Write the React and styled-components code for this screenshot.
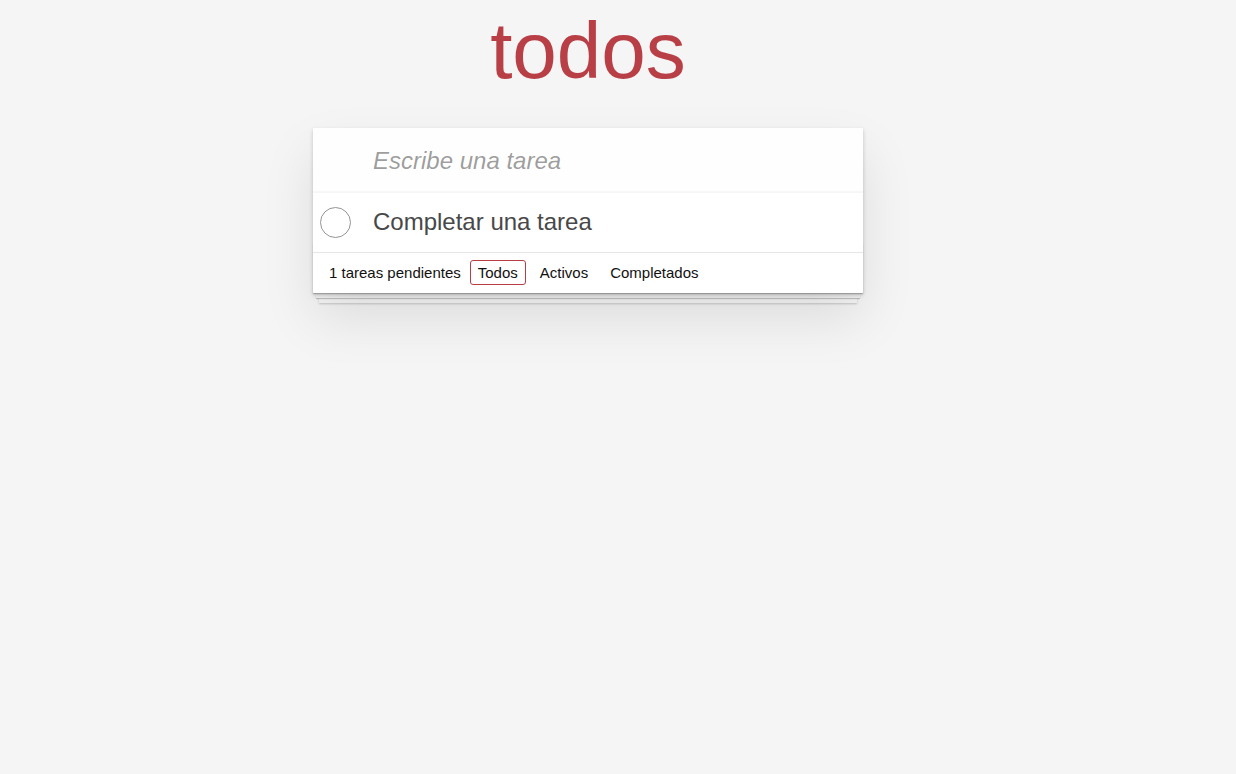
import React, { useState } from "react";
import styled, { createGlobalStyle } from "styled-components";

const GlobalStyle = createGlobalStyle`
  * { box-sizing: border-box; }
  html, body {
    margin: 0;
    padding: 0;
  }
  body {
    background: #f5f5f5;
    color: #111111;
    font: 14px "Liberation Sans", Arial, Helvetica, sans-serif;
    line-height: 1.4em;
    -webkit-font-smoothing: antialiased;
  }
`;

const Page = styled.div`
  display: flex;
  justify-content: center;
  padding-right: 60px;
  min-height: 774px;
`;

const Column = styled.div`
  width: 550px;
  display: flex;
  flex-direction: column;
`;

const Title = styled.h1`
  margin: 5px 0 31px;
  font-size: 80px;
  line-height: 92px;
  font-weight: 200;
  text-align: center;
  color: #b83f45;
  text-rendering: optimizeLegibility;
`;

const Card = styled.section`
  position: relative;
  background: #ffffff;
  box-shadow: 0 2px 4px 0 rgba(0, 0, 0, 0.2), 0 25px 50px 0 rgba(0, 0, 0, 0.1);
`;

const NewTodo = styled.input`
  display: block;
  width: 100%;
  height: 65px;
  margin: 0;
  padding: 16px 16px 16px 60px;
  border: none;
  outline: none;
  background: rgba(0, 0, 0, 0.003);
  box-shadow: inset 0 -2px 1px rgba(0, 0, 0, 0.03);
  font-family: inherit;
  font-size: 24px;
  line-height: 1.4em;
  color: inherit;
  &::placeholder {
    font-style: italic;
    font-weight: 400;
    color: rgba(0, 0, 0, 0.4);
  }
`;

const List = styled.ul`
  margin: 0;
  padding: 0;
  list-style: none;
`;

const Item = styled.li`
  display: flex;
  align-items: center;
  border-bottom: 1px solid #ededed;
  &:last-child {
    border-bottom: none;
  }
`;

const ToggleCell = styled.label`
  width: 60px;
  align-self: stretch;
  display: flex;
  align-items: center;
  padding-left: 7px;
  cursor: pointer;
`;

const ToggleCircle = styled.span`
  width: 31px;
  height: 31px;
  border-radius: 50%;
  border: 1px solid ${(p) => (p.$done ? "#59a193" : "#949494")};
`;

const Label = styled.span`
  flex: 1;
  padding: 15px 15px 15px 0;
  font-size: 24px;
  line-height: 1.2;
  font-weight: 400;
  color: ${(p) => (p.$done ? "#949494" : "#484848")};
  text-decoration: ${(p) => (p.$done ? "line-through" : "none")};
  word-break: break-all;
`;

const Footer = styled.footer`
  position: relative;
  display: flex;
  align-items: center;
  height: 41px;
  padding: 0 15px 0 16px;
  border-top: 1px solid #e6e6e6;
  color: #111111;
  font-size: 15px;

  &::before {
    content: "";
    position: absolute;
    right: 0;
    bottom: 0;
    left: 0;
    height: 50px;
    overflow: hidden;
    z-index: -1;
    box-shadow: 0 1px 1px rgba(0, 0, 0, 0.2), 0 8px 0 -3px #f6f6f6,
      0 9px 1px -3px rgba(0, 0, 0, 0.2), 0 16px 0 -6px #f6f6f6,
      0 17px 2px -6px rgba(0, 0, 0, 0.2);
  }
`;

const Count = styled.span`
  margin-right: 6px;
`;

const Filters = styled.ul`
  display: flex;
  margin: 0;
  padding: 0;
  list-style: none;
`;

const FilterLink = styled.a`
  display: inline-block;
  margin: 0 3px;
  padding: 3px 7px;
  line-height: 17px;
  border: 1px solid ${(p) => (p.$selected ? "#b83f45" : "transparent")};
  border-radius: 3px;
  color: inherit;
  text-decoration: none;
  cursor: pointer;
  &:hover {
    border-color: ${(p) => (p.$selected ? "#b83f45" : "#e5b6b8")};
  }
`;

export default function App() {
  const [todos, setTodos] = useState([
    { id: 1, text: "Completar una tarea", done: false },
  ]);
  const [filter, setFilter] = useState("Todos");
  const pending = todos.filter((t) => !t.done).length;

  const shown = todos.filter((t) =>
    filter === "Activos" ? !t.done : filter === "Completados" ? t.done : true
  );

  return (
    <>
      <GlobalStyle />
      <Page>
        <Column>
          <Title>todos</Title>
          <Card>
            <NewTodo placeholder="Escribe una tarea" />
            <List>
              {shown.map((t) => (
                <Item key={t.id}>
                  <ToggleCell
                    onClick={() =>
                      setTodos((ts) =>
                        ts.map((x) => (x.id === t.id ? { ...x, done: !x.done } : x))
                      )
                    }
                  >
                    <ToggleCircle $done={t.done} />
                  </ToggleCell>
                  <Label $done={t.done}>{t.text}</Label>
                </Item>
              ))}
            </List>
            <Footer>
              <Count>{pending} tareas pendientes</Count>
              <Filters>
                {["Todos", "Activos", "Completados"].map((f) => (
                  <li key={f}>
                    <FilterLink $selected={filter === f} onClick={() => setFilter(f)}>
                      {f}
                    </FilterLink>
                  </li>
                ))}
              </Filters>
            </Footer>
          </Card>
        </Column>
      </Page>
    </>
  );
}
